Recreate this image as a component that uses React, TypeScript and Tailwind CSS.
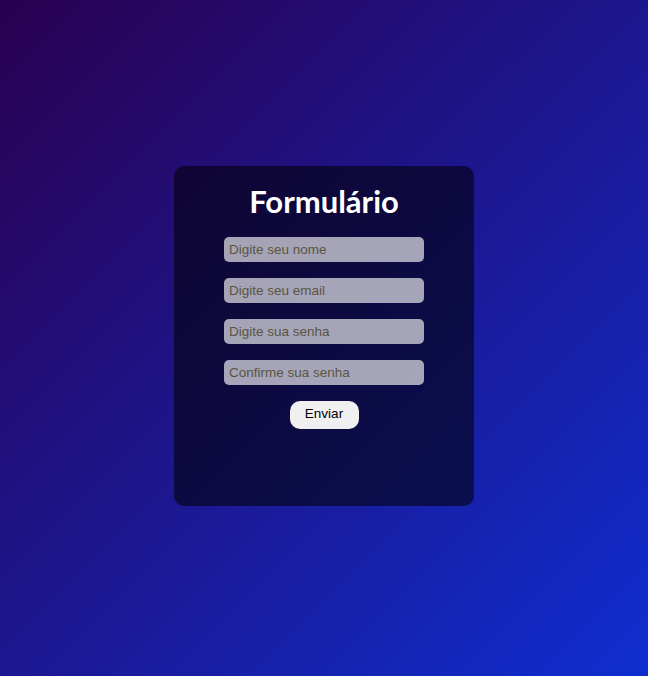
import React from "react";

export default function App() {
  const fields = [
    { ph: "Digite seu nome", type: "text" },
    { ph: "Digite seu email", type: "email" },
    { ph: "Digite sua senha", type: "password" },
    { ph: "Confirme sua senha", type: "password" },
  ];
  return (
    <div className="w-full h-[676px] flex items-center justify-center pb-[5px] bg-[linear-gradient(135deg,#2a0050,#0f2ed0)]">
      <div className="w-[300px] h-[340px] rounded-[10px] bg-black/55 flex flex-col items-center pt-[16px]">
        <h1 className="text-white font-bold text-[31px] leading-[38px] [font-family:Lato,'Open_Sans',sans-serif] mb-[17px]">
          Formulário
        </h1>
        <form className="flex flex-col items-center gap-[16px]" onSubmit={(e) => e.preventDefault()}>
          {fields.map((f) => (
            <input
              key={f.ph}
              type={f.type}
              placeholder={f.ph}
              className="w-[200px] h-[25px] rounded-[5px] bg-white/[0.63] px-[5px] text-[13.5px] text-black placeholder:text-[#5a553e] outline-none [font-family:'Liberation_Sans',Arial,sans-serif]"
            />
          ))}
          <button
            type="submit"
            className="w-[69px] h-[28px] rounded-[10px] bg-[#f0f0f0] text-[13.5px] text-black [font-family:'Liberation_Sans',Arial,sans-serif]"
          >
            Enviar
          </button>
        </form>
      </div>
    </div>
  );
}
